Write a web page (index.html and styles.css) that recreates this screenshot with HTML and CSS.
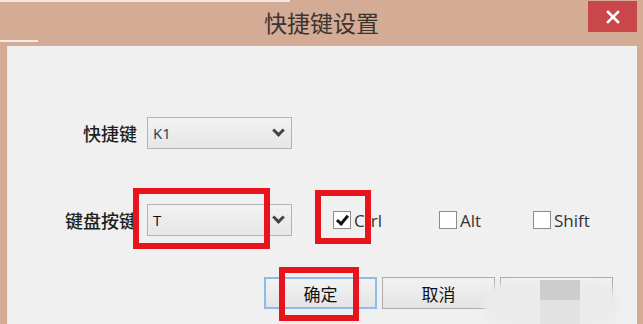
FILE: index.html
```html
<!DOCTYPE html>
<html lang="zh-CN">
<head>
    <meta charset="UTF-8">
    <title>快捷键设置</title>
    <link rel="stylesheet" href="styles.css">
</head>
<body>
    <div class="window">
        <div class="titlebar">
            <span class="title">快捷键设置</span>
            <button type="button" class="close">
                <svg width="14" height="14" viewBox="0 0 14 14"><path d="M2 2 L12 12 M12 2 L2 12" stroke="#fff" stroke-width="2.6" stroke-linecap="square"/></svg>
            </button>
        </div>

        <div class="client">
            <div class="row">
                <label class="row-label">快捷键</label>
                <div class="combo"><span class="combo-value combo-k">K1</span><span class="combo-arrow"></span></div>
            </div>

            <div class="row row-keys">
                <label class="row-label">键盘按键</label>
                <div class="combo"><span class="combo-value">T</span><span class="combo-arrow"></span></div>
                <div class="checks">
                    <label class="check check-ctrl"><span class="box checked"></span>Ctrl</label>
                    <label class="check check-alt"><span class="box"></span>Alt</label>
                    <label class="check"><span class="box"></span>Shift</label>
                </div>
            </div>

            <div class="actions">
                <button type="button" class="btn btn-default">确定</button>
                <button type="button" class="btn">取消</button>
                <button type="button" class="btn"></button>
            </div>
        </div>

        <!-- annotations drawn over the dialog -->
        <div class="mark mark-key"></div>
        <div class="mark mark-ctrl"></div>
        <div class="mark mark-ok"></div>

        <div class="watermark">
            <div class="wm-blob"></div>
            <div class="wm-square"></div>
            <div class="wm-square wm-square-low"></div>
        </div>
    </div>
</body>
</html>
```

FILE: styles.css
```css
body {
    margin: 0;
    background-color: #d4ab95;
    font-family: "Noto Sans CJK SC", "Noto Sans", sans-serif;
    color: #222;
}

.window {
    position: relative;
    width: 643px;
    height: 324px;
    overflow: hidden;
    background-color: #d4ab95;
    display: flex;
    flex-direction: column;
}

.window::before {
    content: "";
    position: absolute;
    left: 0;
    top: 0;
    width: 290px;
    height: 2px;
    background-color: #f3e8e1;
}

.window::after {
    content: "";
    position: absolute;
    left: 0;
    top: 40px;
    width: 38px;
    height: 2px;
    background-color: #f6ece6;
}

.titlebar {
    height: 46px;
    display: grid;
    grid-template-columns: 1fr auto 1fr;
    align-items: start;
}

.title {
    grid-column: 2;
    margin-top: 7px;
    font-size: 23px;
    line-height: 30px;
    color: #3b3431;
}

.close {
    grid-column: 3;
    justify-self: end;
    width: 49px;
    height: 31px;
    margin: 1px 6px 0 0;
    padding: 0;
    border: none;
    background-color: #c9474a;
    display: flex;
    align-items: center;
    justify-content: center;
}

.client {
    flex: 1;
    margin: 0 6px 0 7px;
    padding-top: 71px;
    background-color: #f0f0f0;
    border-left: 1px solid #e6ebf2;
}

.row {
    display: flex;
    align-items: center;
    height: 32px;
}

.row-keys {
    margin-top: 55px;
}

.row-label {
    width: 129px;
    text-align: right;
    margin-right: 10px;
    font-size: 18px;
    font-weight: 500;
    color: #1f1f1f;
}

.combo {
    width: 130px;
    height: 30px;
    border: 1px solid #b4b4b4;
    background: linear-gradient(#f2f2f2, #e6e6e6);
    display: flex;
    align-items: center;
    justify-content: space-between;
    padding: 0 8px 0 5px;
}

.combo-value {
    font-family: "Open Sans", "Noto Sans", sans-serif;
    font-size: 15px;
    color: #111;
}

.combo-k {
    color: #25375a;
}

.combo-arrow {
    width: 6px;
    height: 6px;
    border-right: 3px solid #444;
    border-bottom: 3px solid #444;
    transform: translateY(-3px) rotate(45deg);
}

.checks {
    display: flex;
    align-items: center;
    margin-left: 41px;
}

.check {
    display: flex;
    align-items: center;
    gap: 3px;
    font-family: "Open Sans", "Noto Sans", sans-serif;
    font-size: 17px;
    color: #333;
}

.check-ctrl {
    width: 106px;
}

.check-alt {
    width: 94px;
}

.box {
    width: 16px;
    height: 16px;
    border: 1.5px solid #8c8c8c;
    background-color: #fff;
    position: relative;
}

.box.checked::after {
    content: "";
    position: absolute;
    left: 5px;
    top: 1px;
    width: 4px;
    height: 9px;
    border-right: 3px solid #111;
    border-bottom: 3px solid #111;
    transform: rotate(40deg);
}

.actions {
    display: flex;
    gap: 5px;
    margin-top: 41px;
    padding-left: 256px;
}

.btn {
    width: 113px;
    height: 32px;
    border: 1px solid #acacac;
    background: linear-gradient(#f2f2f2, #e4e4e4);
    font-family: "Noto Sans CJK SC", sans-serif;
    font-size: 17px;
    color: #111;
    padding: 0;
}

.btn-default {
    border: 2px solid #8dbbea;
}

.mark {
    position: absolute;
    border: 6px solid #e8141c;
    box-sizing: border-box;
}

.mark-key {
    left: 133px;
    top: 188px;
    width: 137px;
    height: 61px;
}

.mark-ctrl {
    left: 315px;
    top: 190px;
    width: 56px;
    height: 54px;
}

.mark-ok {
    left: 279px;
    top: 267px;
    width: 80px;
    height: 54px;
}

.watermark {
    position: absolute;
    left: 477px;
    top: 273px;
    width: 145px;
    height: 51px;
}

.wm-blob {
    position: absolute;
    left: 6px;
    top: 10px;
    width: 136px;
    height: 44px;
    border-radius: 22px;
    background-color: #ebebeb;
    filter: blur(3px);
}

.wm-square {
    position: absolute;
    left: 63px;
    top: 7px;
    width: 40px;
    height: 20px;
    background-color: #cdcdcd;
}

.wm-square-low {
    top: 27px;
    height: 24px;
    background-color: #e2e2e2;
}
```
